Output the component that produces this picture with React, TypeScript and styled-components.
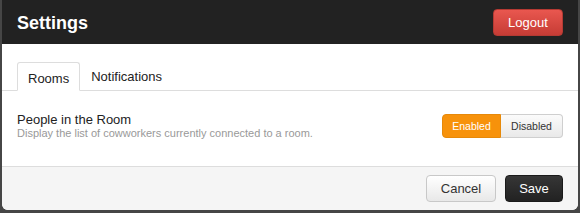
import React, { useState } from "react";
import styled, { createGlobalStyle } from "styled-components";

const Global = createGlobalStyle`
  html, body { margin: 0; padding: 0; }
  body {
    background: #464646;
    font-family: "Liberation Sans", Arial, sans-serif;
    overflow: hidden;
  }
`;

const Page = styled.div`
  padding: 0 2px;
  height: 213px;
  overflow: hidden;
`;

const Modal = styled.div`
  width: 576px;
  background: #fff;
  border-radius: 0 0 6px 6px;
  overflow: hidden;
`;

const Header = styled.div`
  height: 44px;
  background: #222;
  display: flex;
  align-items: center;
  justify-content: space-between;
  padding: 0 15px;
`;

const Title = styled.h3`
  margin: 0;
  color: #fff;
  font-size: 18px;
  font-weight: bold;
  line-height: 20px;
  position: relative;
  top: 1px;
`;

const Btn = styled.button<{ $variant: "danger" | "default" | "inverse"; $w: number }>`
  font-family: "Liberation Sans", Arial, sans-serif;
  font-size: 13px;
  height: 27px;
  width: ${({ $w }) => $w}px;
  padding: 0;
  border-radius: 4px;
  cursor: pointer;
  border: 1px solid;
  ${({ $variant }) =>
    $variant === "danger"
      ? `
    color: #fff;
    background: linear-gradient(#e9574f, #c63c35);
    border-color: #b53a33;
  `
      : $variant === "inverse"
      ? `
    color: #fff;
    background: linear-gradient(#363636, #222);
    border-color: #1a1a1a;
  `
      : `
    color: #333;
    background: linear-gradient(#fff, #e8e8e8);
    border-color: #c8c8c8;
  `}
`;

const Body = styled.div`
  padding-top: 18px;
`;

const Tabs = styled.div`
  display: flex;
  padding-left: 15px;
  border-bottom: 1px solid #ddd;
  height: 28px;
`;

const Tab = styled.div<{ $active?: boolean }>`
  font-size: 13px;
  color: #222;
  padding: 0 10px;
  height: 28px;
  box-sizing: border-box;
  display: flex;
  align-items: center;
  border-radius: 3px 3px 0 0;
  ${({ $active }) =>
    $active
      ? `
    background: #fff;
    border: 1px solid #ddd;
    border-bottom-color: #fff;
    height: 29px;
    padding-top: 3px;
  `
      : `
    border: 1px solid transparent;
  `}
  cursor: pointer;
`;

const Content = styled.div`
  height: 75px;
  box-sizing: border-box;
  padding: 21px 15px 0;
  display: flex;
  align-items: flex-start;
  justify-content: space-between;
`;

const Setting = styled.div`
  display: flex;
  flex-direction: column;
`;

const SettingName = styled.div`
  font-size: 13px;
  line-height: 15px;
  color: #222;
`;

const SettingDesc = styled.div`
  font-size: 11px;
  line-height: 13px;
  color: #999;
`;

const Group = styled.div`
  display: flex;
  margin-top: 2px;
`;

const Seg = styled.button<{ $on: boolean }>`
  font-family: "Liberation Sans", Arial, sans-serif;
  font-size: 10.5px;
  height: 24px;
  border: 1px solid;
  cursor: pointer;
  padding: 0;
  &:first-child {
    border-radius: 4px 0 0 4px;
    width: 59px;
  }
  &:last-child {
    border-radius: 0 4px 4px 0;
    width: 62px;
    border-left: none;
  }
  ${({ $on }) =>
    $on
      ? `
    color: #fff;
    background: #f7920b;
    border-color: #e6890a;
  `
      : `
    color: #333;
    background: linear-gradient(#fbfbfb, #e9e9e9);
    border-color: #cfcfcf;
  `}
`;

const Footer = styled.div`
  border-top: 1px solid #ddd;
  background: #f5f5f5;
  height: 43px;
  display: flex;
  align-items: center;
  justify-content: flex-end;
  gap: 9px;
  padding: 0 15px;
`;

export default function App() {
  const [on, setOn] = useState(true);
  return (
    <>
      <Global />
      <Page>
        <Modal>
          <Header>
            <Title>Settings</Title>
            <Btn $variant="danger" $w={70}>Logout</Btn>
          </Header>
          <Body>
            <Tabs>
              <Tab $active>Rooms</Tab>
              <Tab>Notifications</Tab>
            </Tabs>
            <Content>
              <Setting>
                <SettingName>People in the Room</SettingName>
                <SettingDesc>
                  Display the list of cowworkers currently connected to a room.
                </SettingDesc>
              </Setting>
              <Group>
                <Seg $on={on} onClick={() => setOn(true)}>
                  Enabled
                </Seg>
                <Seg $on={!on} onClick={() => setOn(false)}>
                  Disabled
                </Seg>
              </Group>
            </Content>
          </Body>
          <Footer>
            <Btn $variant="default" $w={70}>Cancel</Btn>
            <Btn $variant="inverse" $w={58}>Save</Btn>
          </Footer>
        </Modal>
      </Page>
    </>
  );
}
